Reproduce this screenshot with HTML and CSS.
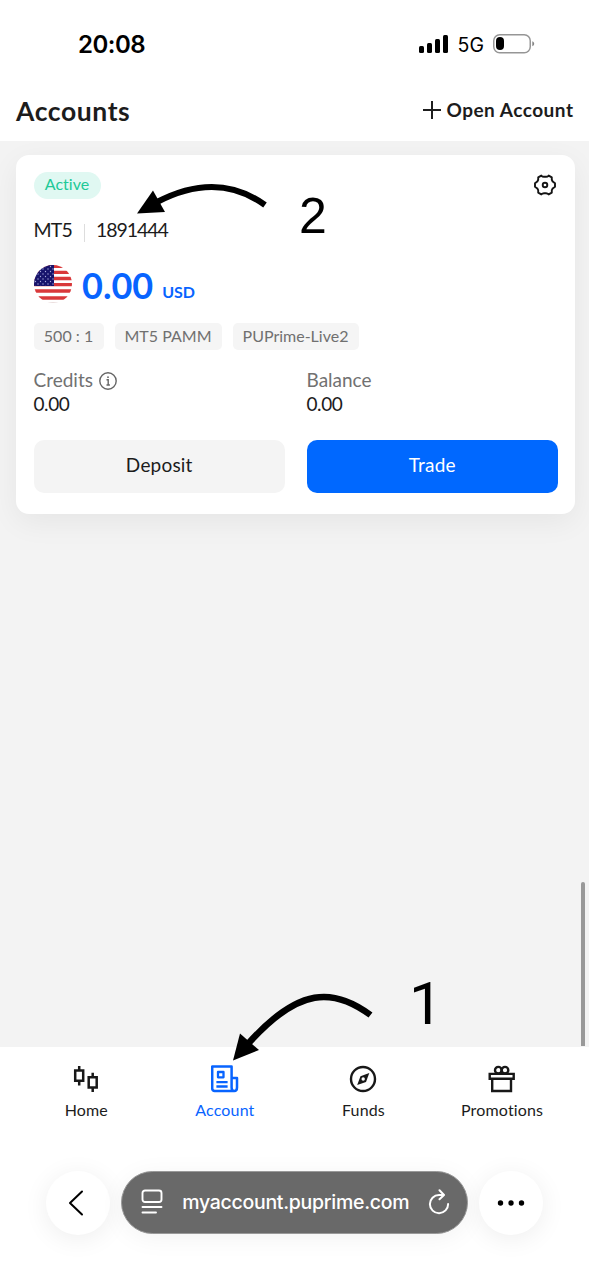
FILE: index.html
```html
<!DOCTYPE html>
<html lang="en">
<head>
<meta charset="utf-8">
<title>Accounts</title>
<link rel="stylesheet" href="styles.css">
</head>
<body>
<div class="screen">
  <div class="status-bar">
    <span class="clock">20:08</span>
    <div class="status-icons">
      <svg class="signal" width="30" height="20" viewBox="0 0 30 20"><rect x="0" y="12" width="5" height="7" rx="1.5"/><rect x="8" y="9" width="5" height="10" rx="1.5"/><rect x="16" y="5" width="5" height="14" rx="1.5"/><rect x="24" y="1" width="5" height="18" rx="1.5"/></svg>
      <span class="network">5G</span>
      <svg class="battery" width="42" height="20" viewBox="0 0 42 20"><rect x=".75" y=".75" width="36.5" height="18" rx="6" fill="none" stroke="#969696" stroke-width="1.5"/><rect x="3" y="3" width="8" height="13" rx="4"/><path d="M39.300 7.200c2.500.7 2.500 4.300 0 5z" fill="#858585"/></svg>
    </div>
  </div>
  <header class="header">
    <h1 class="title">Accounts</h1>
    <div class="open-account">
      <svg width="18" height="18" viewBox="0 0 18 18"><path d="M9 0v18M0 9h18" stroke="#1e1e1e" stroke-width="2"/></svg>
      <span class="open-label">Open Account</span>
    </div>
  </header>

  <main class="content">
    <section class="card">
      <div class="card-top">
        <span class="badge">Active</span>
        <svg class="gear" width="24" height="24" viewBox="0 0 24 24" fill="none" stroke="#141414" stroke-width="1.9" stroke-linejoin="round"><path d="M8.300 2.600Q9.800 4.200 12 3.700Q14.200 4.200 15.700 2.600L18.800 4.400Q18.300 6.800 19.700 8.600L22 10.300V13.700L19.700 15.400Q18.300 17.200 18.800 19.600L15.700 21.400Q14.200 19.800 12 20.300Q9.800 19.800 8.300 21.400L5.200 19.600Q5.700 17.200 4.300 15.400L2 13.700V10.300L4.300 8.600Q5.700 6.800 5.200 4.400Z"/><circle cx="12" cy="12" r="2.300"/></svg>
      </div>
      <div class="account-id">
        <span class="platform">MT5</span>
        <span class="divider"></span>
        <span class="number">1891444</span>
      </div>
      <div class="amount">
        <svg class="flag" width="38" height="38" viewBox="0 0 38 38">
          <defs>
            <clipPath id="disc"><circle cx="19" cy="19" r="19"/></clipPath>
            <pattern id="stars" width="5" height="5" patternUnits="userSpaceOnUse"><circle cx="1.500" cy="1.500" r=".65" fill="#a9acdc"/><circle cx="4" cy="4" r=".65" fill="#a9acdc"/></pattern>
          </defs>
          <g clip-path="url(#disc)">
            <rect width="38" height="38" fill="#fff"/>
            <path d="M0 1.300h38M0 7.300h38M0 13.500h38M0 19.700h38M0 26h38M0 33h38" stroke="#d9383a" stroke-width="3.300"/>
            <path d="M0 37.700h38" stroke="#e5d5d5" stroke-width="1"/>
            <rect width="20" height="21" fill="#17146c"/><rect width="20" height="21" fill="url(#stars)"/>
          </g>
        </svg>
        <span class="value">0.00</span>
        <span class="currency">USD</span>
      </div>
      <div class="tags">
        <span class="tag tag-leverage">500 : 1</span>
        <span class="tag tag-type">MT5 PAMM</span>
        <span class="tag tag-server">PUPrime-Live2</span>
      </div>
      <div class="stats">
        <div class="stat">
          <div class="stat-name"><span>Credits</span><svg class="info" width="18" height="18" viewBox="0 0 18 18" fill="none" stroke="#666" stroke-width="1.400"><circle cx="9" cy="9" r="8.200"/><path d="M7.500 7.800H9.200V13M7.500 13H10.900"/><circle cx="9" cy="5.200" r=".9" fill="#666" stroke="none"/></svg></div>
          <div class="stat-value">0.00</div>
        </div>
        <div class="stat">
          <div class="stat-name"><span>Balance</span></div>
          <div class="stat-value">0.00</div>
        </div>
      </div>
      <div class="actions">
        <div class="button">Deposit</div>
        <div class="button primary">Trade</div>
      </div>
    </section>
    <div class="scrollbar"></div>
  </main>

  <nav class="tabs">
    <div class="tab">
      <svg width="28" height="28" viewBox="0 0 28 28" fill="none" stroke="#181818" stroke-width="2.500"><path d="M3.200 5.500h8v10.200h-8zM7.200 1v4.500M7.200 16v4.500M16.700 12.300h8v10.200h-8zM20.700 7.800v4M20.700 22.500v4.500"/></svg>
      <span class="tab-label">Home</span>
    </div>
    <div class="tab active">
      <svg width="28" height="28" viewBox="0 0 28 28" fill="none" stroke="#0864ff" stroke-width="2.500" stroke-linejoin="round"><path d="M24 26H3.600A2.400 2.400 0 0 1 1.200 23.600V1.600H20.600V22.500Q20.600 26 23.300 26T26 22.500V13H20.600"/><path d="M7 7h5.500v5.300H7zM5.400 17.100h11.200M5.400 21.500h11.200" stroke-width="2.300"/></svg>
      <span class="tab-label">Account</span>
    </div>
    <div class="tab">
      <svg width="28" height="28" viewBox="0 0 28 28" fill="none" stroke="#181818" stroke-width="2.400"><circle cx="14" cy="14" r="12"/><path d="M20.300 7.900L17 16.900L8.200 20L11.500 11.200Z" fill="#181818" stroke="none"/><circle cx="14.200" cy="14" r="1.700" fill="#fff" stroke="none"/></svg>
      <span class="tab-label">Funds</span>
    </div>
    <div class="tab">
      <svg width="28" height="28" viewBox="0 0 28 28" fill="none" stroke="#181818" stroke-width="2.400"><path d="M1.700 8.900h24v4.800h-24zM4.200 14v12h18.800V14"/><circle cx="10.300" cy="5.200" r="3.300"/><circle cx="17" cy="5.200" r="3.300"/></svg>
      <span class="tab-label">Promotions</span>
    </div>
  </nav>

  <footer class="browser-bar">
    <div class="round"><svg class="back" width="16" height="26" viewBox="0 0 16 26"><path d="M14 1.500L2 13L14 24.500" fill="none" stroke="#000" stroke-width="2" stroke-linecap="round" stroke-linejoin="round"/></svg></div>
    <div class="address">
      <svg width="22" height="26" viewBox="0 0 22 26" fill="none" stroke="#fff" stroke-width="1.900" stroke-linecap="round"><rect x="1.500" y="1.500" width="19" height="11.500" rx="2.500"/><path d="M1.500 18h19M1.500 23.500h13.500"/></svg>
      <span class="url">myaccount.puprime.com</span>
      <svg class="reload" width="22" height="26" viewBox="0 0 22 26" fill="none" stroke="#fff" stroke-width="2" stroke-linecap="round" stroke-linejoin="round"><path d="M15.800 6H11A9.100 9.100 0 1 0 20.100 14.900M11.500 1.300L16 6L11.500 10.300"/></svg>
    </div>
    <div class="round"><svg width="28" height="8" viewBox="0 0 28 8"><circle cx="3.500" cy="4" r="2.700"/><circle cx="14" cy="4" r="2.700"/><circle cx="24.500" cy="4" r="2.700"/></svg></div>
  </footer>

  <svg class="arrow arrow-number" width="132" height="32" viewBox="0 0 132 32"><path d="M20 19C64-4 99 1 128 22" fill="none" stroke="#000" stroke-width="6"/><path d="M0 30.500L16 7.500L28 29Z"/></svg>
  <span class="note note-two">2</span>
  <svg class="arrow arrow-tab" width="142" height="70" viewBox="0 0 142 70"><path d="M14 52C66-7 101-5 137.500 22" fill="none" stroke="#000" stroke-width="6.500"/><path d="M0 67.500L7 40.500L26 57Z"/></svg>
  <span class="note note-one">1</span>
</div>
</body>
</html>
```
FILE: styles.css
```css
* { box-sizing: border-box; }
body { margin: 0; background: #fff; font-family: Lato, "Liberation Sans", sans-serif; font-variant-ligatures: none; color: #1c1c1c; }
svg { display: block; flex: none; }
span { white-space: nowrap; }
.screen { position: relative; width: 589px; height: 1280px; display: flex; flex-direction: column; overflow: hidden; }

.status-bar { height: 82px; padding: 5px 54px 0 78px; display: flex; align-items: center; justify-content: space-between; font-family: Inter, sans-serif; color: #000; }
.clock { padding-top: 2px; font-size: 24px; font-weight: 600; line-height: 30px; letter-spacing: -.5px; }
.status-icons { display: flex; align-items: center; gap: 9px; }
.network { padding-top: 2px; font-size: 19.5px; line-height: 22px; }

.header { height: 59px; padding: 0 16px; display: flex; align-items: center; justify-content: space-between; }
.title { margin: 0; padding-bottom: 2px; font-size: 26.5px; line-height: 32px; font-weight: 700; letter-spacing: .6px; }
.open-account { display: flex; align-items: center; gap: 5px; padding-bottom: 4px; }
.open-label { font-size: 19px; line-height: 24px; font-weight: 700; letter-spacing: .5px; margin-right: -.5px; }

.content { position: relative; height: 906px; padding: 14px 14px 0 16px; background: #f3f3f3; }
.card { height: 359px; padding: 17px 18px 0 17.5px; border-radius: 13px; background: #fff; box-shadow: 0 8px 30px rgba(0, 0, 0, .06); }
.card-top { height: 27px; display: flex; justify-content: space-between; }
.badge { width: 67px; height: 27px; border-radius: 14px; background: #e0f8f2; color: #20c997; font-size: 16px; line-height: 24px; text-align: center; }
.gear { margin-top: 1px; }
.account-id { height: 24px; margin-top: 19px; display: flex; align-items: center; font-size: 19.5px; line-height: 24px; }
.platform { letter-spacing: -.8px; }
.number { letter-spacing: -1.050px; }
.divider { width: 1px; height: 18px; margin: 5px 11px 0 12px; background: #ddd; }
.amount { height: 38px; margin-top: 23px; display: flex; color: #0864ff; }
.value { margin-left: 10.500px; font-size: 36px; line-height: 40px; font-weight: 700; }
.currency { margin-left: 9px; font-size: 16px; line-height: 53px; font-weight: 700; }
.tags { margin-top: 20px; height: 27px; display: flex; gap: 11px; }
.tag { height: 27px; border-radius: 5px; background: #f5f5f5; color: #707070; font-size: 16px; line-height: 25px; text-align: center; }
.tag-leverage { width: 70px; }
.tag-type { width: 107px; }
.tag-server { width: 126px; }
.stats { margin-top: 18px; height: 48px; display: grid; grid-template-columns: 251.500px 251.500px; column-gap: 21.500px; }
.stat-name { display: flex; align-items: center; gap: 6px; height: 24px; font-size: 19px; color: #717171; line-height: 24px; }
.info { margin-top: 2px; }
.stat-value { height: 24px; font-size: 19px; line-height: 24px; letter-spacing: -.4px; }
.actions { margin-top: 24px; display: grid; grid-template-columns: 251.500px 251.500px; column-gap: 21.500px; }
.button { height: 53px; border-radius: 10px; background: #f4f4f4; font-size: 19px; line-height: 49px; letter-spacing: .2px; text-align: center; }
.primary { background: #0068ff; color: #fff; }
.scrollbar { position: absolute; right: 4px; bottom: 1px; width: 4px; height: 164px; border-radius: 2px 2px 0 0; background: #999; }

.tabs { height: 103px; padding: 18px 17px 0; display: grid; grid-template-columns: repeat(4, 138.600px); }
.tab { display: flex; flex-direction: column; align-items: center; gap: 6px; }
.tab-label { font-size: 16px; line-height: 21px; letter-spacing: .15px; }
.active { color: #0864ff; }

.browser-bar { height: 130px; padding: 20.500px 46px 0 45.500px; display: flex; align-items: flex-start; justify-content: space-between; }
.round { width: 64px; height: 64px; border-radius: 50%; background: #fff; box-shadow: 0 4px 26px rgba(0, 0, 0, .07); display: flex; align-items: center; justify-content: center; }
.back { margin-right: 4px; }
.address { width: 347px; height: 63px; padding: 0 16.500px 0 19.500px; border: 1px solid #999; border-radius: 32px; background: #696969; color: #fff; box-shadow: 0 4px 26px rgba(0, 0, 0, .05); display: flex; align-items: center; justify-content: space-between; }
.url { font-family: Inter, sans-serif; font-size: 19.500px; font-weight: 500; line-height: 24px; letter-spacing: -.28px; }

.arrow { position: absolute; }
.arrow-number { left: 137px; top: 183px; }
.arrow-tab { left: 233px; top: 993px; }
.note { position: absolute; font-family: "Liberation Sans", sans-serif; color: #000; }
.note-two { left: 299px; top: 189px; font-size: 50px; line-height: 54px; }
.note-one { left: 409px; top: 971px; font-family: Roboto, sans-serif; font-size: 60px; line-height: 66px; }
```
